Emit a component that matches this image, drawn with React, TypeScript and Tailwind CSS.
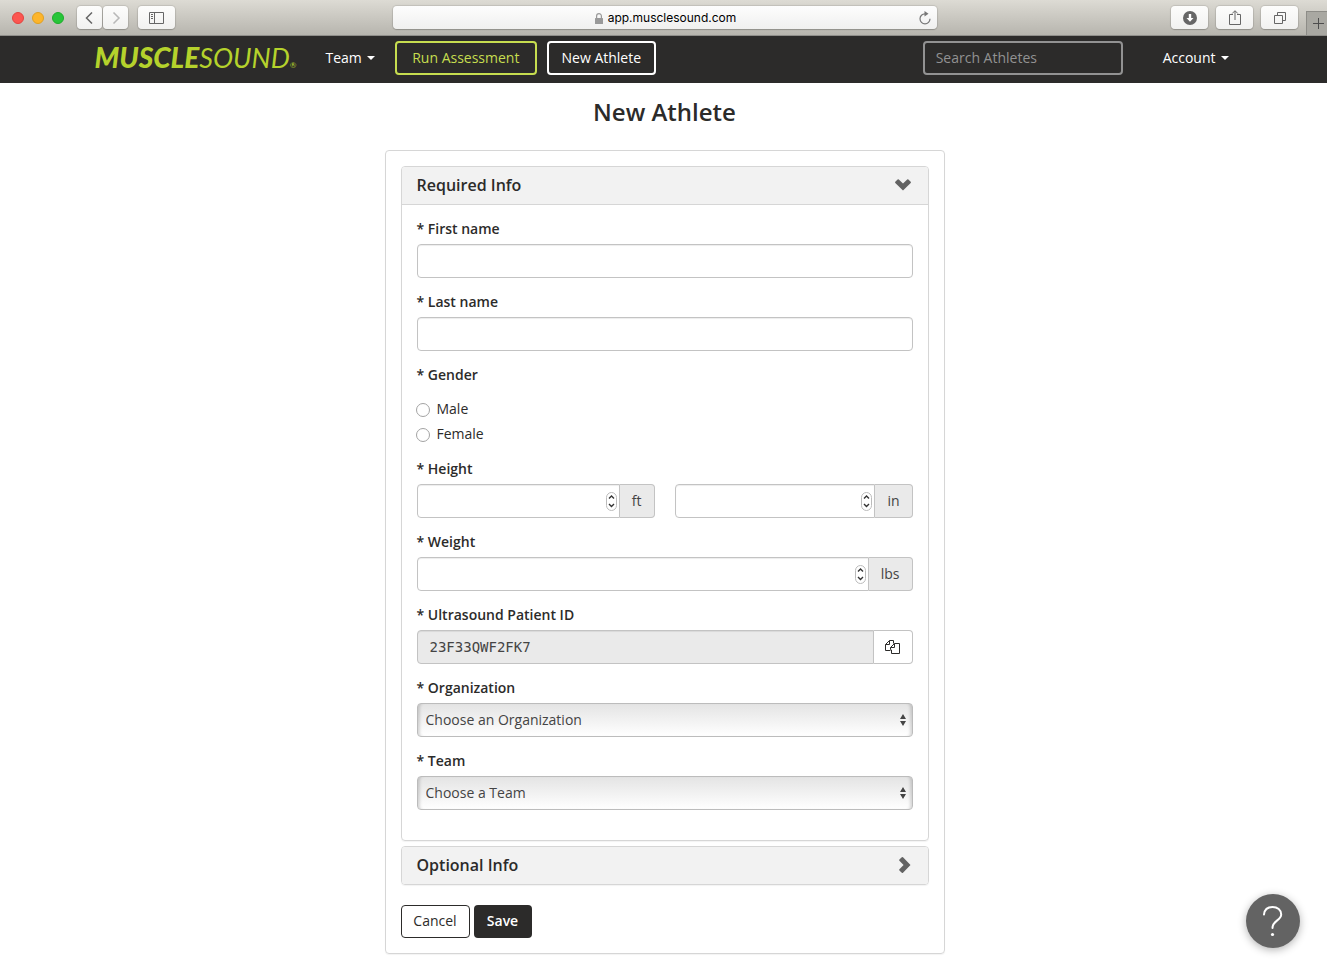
import { useState } from 'react'
import type { ReactNode } from 'react'

const fieldClasses =
  'h-[34px] min-w-0 flex-1 border border-[#c3c3c3] bg-white px-3 text-sm text-[#444] shadow-[inset_0_1px_1px_rgba(0,0,0,0.075)] outline-none'

const chromeButton =
  'flex h-[23px] items-center justify-center rounded bg-gradient-to-b from-[#fdfdfc] to-[#f1f1f0] text-[#666] shadow-[0_0_1px_1px_rgba(0,0,0,0.1),0_1px_1px_rgba(0,0,0,0.15)]'

export default function App() {
  return (
    <div className="min-h-screen bg-white font-['Open_Sans',sans-serif] text-sm text-[#2c2b2a]">
      <BrowserBar />
      <Navbar />
      <main className="pr-4 pl-[18px]">
        <h1 className="mt-[11px] text-center text-2xl leading-9 font-semibold">New Athlete</h1>
        <AthleteForm />
      </main>
      <button
        type="button"
        aria-label="Help"
        className="fixed right-[27px] bottom-[21px] flex size-[54px] items-center justify-center rounded-full bg-[#636363] shadow-[0_2px_8px_rgba(0,0,0,0.3)]"
      >
        <svg className="h-8 w-6" viewBox="0 0 24 32" fill="none" stroke="white" strokeWidth="2" strokeLinecap="round">
          <path d="M3 9.500C3.500 4.500 7 2 11.500 2c5 0 8.700 3 8.700 7.500C20.200 15.500 11.500 15.500 11.500 23" />
          <circle cx="11.500" cy="29.500" r="1.600" fill="white" stroke="none" />
        </svg>
      </button>
    </div>
  )
}

function BrowserBar() {
  return (
    <div className="flex h-9 items-center border-b border-[#8f8e8a] bg-gradient-to-b from-[#dddbd4] to-[#b7b5ae] pl-3">
      <div className="flex w-[381px] items-center">
        <div className="flex gap-2">
          <span className="size-3 rounded-full border border-[#e2443f] bg-[#fc5650]" />
          <span className="size-3 rounded-full border border-[#dfa023] bg-[#fdb52b]" />
          <span className="size-3 rounded-full border border-[#1dad2b] bg-[#27c539]" />
        </div>
        <div className="ml-[13px] flex gap-px">
          <button type="button" aria-label="Back" className={`${chromeButton} w-[25px]`}>
            <svg className="size-3" viewBox="0 0 12 12" fill="none" stroke="currentColor" strokeWidth="1.500">
              <path d="M8 0.500L2.500 6l5.500 5.500" />
            </svg>
          </button>
          <button type="button" aria-label="Forward" className={`${chromeButton} w-[25px]`}>
            <svg className="size-3" viewBox="0 0 12 12" fill="none" stroke="#b8b8b8" strokeWidth="1.500">
              <path d="M3.500 0.500L9 6l-5.500 5.500" />
            </svg>
          </button>
        </div>
        <button type="button" aria-label="Sidebar" className={`${chromeButton} ml-[10px] w-[37px]`}>
          <svg className="h-3 w-[15px]" viewBox="0 0 15 12" fill="none" stroke="currentColor">
            <path d="M0.500 0.500h14v11h-14zM5.500 0.500v11M2 2.500h2M2 4.500h2M2 6.500h2" />
          </svg>
        </button>
      </div>

      <div className="flex h-[23px] flex-1 items-center rounded bg-gradient-to-b from-[#fdfdfd] to-[#f0f0ef] pr-[5px] pl-5 text-black shadow-[0_0_1px_1px_rgba(0,0,0,0.1),0_1px_1px_rgba(0,0,0,0.15)]">
        <div className="flex flex-1 items-center justify-center gap-[5px] pt-px">
          <svg className="h-[11px] w-2" viewBox="0 0 8 11">
            <rect y="5" width="8" height="6" rx="0.500" fill="#999" />
            <path d="M1.600 5V3a2.400 2.400 0 0 1 4.800 0v2" fill="none" stroke="#999" strokeWidth="1.200" />
          </svg>
          <span className="font-[Inter,sans-serif] text-xs">app.musclesound.com</span>
        </div>
        <button type="button" aria-label="Reload">
          <svg className="size-[14px]" viewBox="0 0 14 14" fill="none" stroke="#777" strokeWidth="1.200">
            <path d="M7 2.800A5 5 0 1 0 12 7.800" />
            <path d="M6.500 0v5.600L10.500 2.800z" fill="#777" stroke="none" />
          </svg>
        </button>
      </div>

      <div className="flex w-[390px] items-center justify-end self-stretch">
        <div className="flex gap-2">
          <button type="button" aria-label="Downloads" className={`${chromeButton} w-[37px]`}>
            <svg className="size-[14px]" viewBox="0 0 14 14">
              <circle cx="7" cy="7" r="7" fill="#666" />
              <path d="M5.800 3h2.400v4h2.300L7 10.800 3.500 7h2.300z" fill="white" />
            </svg>
          </button>
          <button type="button" aria-label="Share" className={`${chromeButton} w-[37px]`}>
            <svg className="h-[15px] w-3" viewBox="0 0 12 15" fill="none" stroke="currentColor">
              <path d="M4 4.500H0.500v10h11v-10H8M6 10V1M3.200 3.500L6 0.700l2.800 2.800" />
            </svg>
          </button>
          <button type="button" aria-label="Show tabs" className={`${chromeButton} w-[37px]`}>
            <svg className="size-3" viewBox="0 0 12 12" fill="none" stroke="currentColor">
              <path d="M0.500 3.500h8v8h-8zM3.500 3.500v-3h8v8h-3" />
            </svg>
          </button>
        </div>
        <button
          type="button"
          aria-label="New tab"
          className="ml-2 flex h-6 w-[21px] items-center justify-end self-end border-t border-l border-[#8d8c87] bg-[#a9a8a2] pr-[3px]"
        >
          <svg className="size-[11px]" viewBox="0 0 11 11" stroke="#4d4d4d">
            <path d="M5.500 0v11M0 5.500h11" />
          </svg>
        </button>
      </div>
    </div>
  )
}

function Caret() {
  return (
    <svg className="h-1 w-2" viewBox="0 0 8 4" fill="currentColor">
      <path d="M0 0h8L4 4z" />
    </svg>
  )
}

function Navbar() {
  return (
    <nav className="bg-[#2c2b2a] text-white">
      <div className="mx-auto flex h-[47px] max-w-[1170px] items-center pr-5 pb-[3px] pl-4">
        <a
          href="#"
          className="flex w-[231px] items-baseline pt-[6px] font-[Lato,sans-serif] text-[27px] leading-8 text-[#b5d22c] italic"
        >
          <span className="text-[28px] font-black">MUSCLE</span>
          <span>SOUND</span>
          <span className="text-[8px]">®</span>
        </a>
        <button type="button" className="mr-5 flex items-center gap-[5px]">
          Team <Caret />
        </button>
        <button
          type="button"
          className="mr-[10px] h-[34px] w-[142px] rounded border-2 border-[#c6dd4f] pb-px text-[#c6dd4f]"
        >
          Run Assessment
        </button>
        <button type="button" className="h-[34px] w-[109px] rounded border-2 border-white pb-px">
          New Athlete
        </button>
        <input
          type="text"
          aria-label="Search Athletes"
          placeholder="Search Athletes"
          className="mr-10 ml-auto h-[34px] w-[200px] rounded border-2 border-[#929292] bg-transparent px-[11px] pb-[2px] outline-none placeholder:text-[#929292]"
        />
        <button type="button" className="flex items-center gap-[5px]">
          Account <Caret />
        </button>
      </div>
    </nav>
  )
}

function AthleteForm() {
  const [requiredOpen, setRequiredOpen] = useState(true)
  const [optionalOpen, setOptionalOpen] = useState(false)

  return (
    <form
      onSubmit={(e) => e.preventDefault()}
      className="mx-auto mt-5 mb-3 max-w-[560px] rounded border border-[#d6d6d6] p-[15px] shadow-[0_1px_1px_rgba(0,0,0,0.05)]"
    >
      <Panel title="Required Info" open={requiredOpen} onToggle={() => setRequiredOpen(!requiredOpen)}>
        <Field label="First name" id="first-name">
          <input id="first-name" type="text" className={`${fieldClasses} rounded`} />
        </Field>
        <Field label="Last name" id="last-name">
          <input id="last-name" type="text" className={`${fieldClasses} rounded`} />
        </Field>

        <fieldset className="pb-px">
          <legend className="leading-5 font-semibold">* Gender</legend>
          <div className="mt-[14px] flex flex-col gap-[5px]">
            <Radio label="Male" />
            <Radio label="Female" />
          </div>
        </fieldset>

        <div className="grid grid-cols-2 items-end gap-5">
          <Field label="Height" id="height-ft">
            <NumberInput id="height-ft" unit="ft" />
          </Field>
          <NumberInput id="height-in" unit="in" label="Height, inches" />
        </div>
        <Field label="Weight" id="weight">
          <NumberInput id="weight" unit="lbs" />
        </Field>

        <Field label="Ultrasound Patient ID" id="patient-id">
          <input
            id="patient-id"
            type="text"
            readOnly
            value="23F33QWF2FK7"
            className="h-[34px] min-w-0 flex-1 rounded-l border border-[#c3c3c3] bg-[#eaeaea] px-3 font-['DejaVu_Sans_Mono',monospace] text-sm text-[#444] shadow-[inset_0_1px_1px_rgba(0,0,0,0.075)] outline-none"
          />
          <button
            type="button"
            aria-label="Copy patient ID"
            className="flex w-[39px] items-center justify-center rounded-r border border-l-0 border-[#c3c3c3]"
          >
            <svg className="size-[15px]" viewBox="0 0 15 15" fill="none" stroke="currentColor">
              <path d="M5.500 10.500h-5v-6L4.500 0.500h4v3M4.500 0.500v4h-4" />
              <path d="M9.500 3.500h5v10h-8v-3.500l-1-0.500v-2zM9.500 3.500v4h-4" />
            </svg>
          </button>
        </Field>

        <Field label="Organization" id="organization">
          <SelectInput id="organization" placeholder="Choose an Organization" />
        </Field>
        <Field label="Team" id="team">
          <SelectInput id="team" placeholder="Choose a Team" />
        </Field>
      </Panel>

      <div className="mt-[5px]">
        <Panel title="Optional Info" open={optionalOpen} onToggle={() => setOptionalOpen(!optionalOpen)} />
      </div>

      <div className="mt-5 flex gap-1">
        <button type="button" className="h-[33px] w-[69px] rounded border border-[#2c2b2a] pb-px">
          Cancel
        </button>
        <button type="submit" className="h-[33px] w-[58px] rounded bg-[#2c2b2a] pb-px font-semibold text-white">
          Save
        </button>
      </div>
    </form>
  )
}

function Panel({
  title,
  open,
  onToggle,
  children,
}: {
  title: string
  open: boolean
  onToggle: () => void
  children?: ReactNode
}) {
  return (
    <section className="overflow-hidden rounded border border-[#d6d6d6] shadow-[0_1px_1px_rgba(0,0,0,0.05)]">
      <button
        type="button"
        aria-expanded={open}
        onClick={onToggle}
        className="flex h-[37px] w-full items-center justify-between bg-[#f2f2f2] pr-[17px] pb-px pl-[15px] text-base font-semibold"
      >
        {title}
        {/* Down when the panel is open, right when it is collapsed */}
        <svg className="size-4" viewBox="0 0 16 16" fill="#636363">
          {open ? (
            <path d="M0.300 4.800L2.600 2.400a1 1 0 0 1 1.200 0L8 6.600l4.200-4.200a1 1 0 0 1 1.200 0L15.700 4.800a1 1 0 0 1 0 1.200L8 13.500 0.300 6a1 1 0 0 1 0-1.200z" />
          ) : (
            <path d="M6.800 0.300L4.400 2.600a1 1 0 0 0 0 1.200L8.600 8l-4.200 4.200a1 1 0 0 0 0 1.200L6.800 15.700a1 1 0 0 0 1.200 0L15.500 8 8 0.300a1 1 0 0 0-1.200 0z" />
          )}
        </svg>
      </button>
      {open && children && (
        <div className="flex flex-col gap-[14px] border-t border-[#d6d6d6] px-[15px] pt-[14px] pb-[30px]">{children}</div>
      )}
    </section>
  )
}

function Field({ label, id, children }: { label: string; id: string; children: ReactNode }) {
  return (
    <div>
      <label htmlFor={id} className="mb-[5px] block leading-5 font-semibold">
        * {label}
      </label>
      <div className="flex">{children}</div>
    </div>
  )
}

function Radio({ label }: { label: string }) {
  return (
    <label className="-ml-px flex items-center gap-[7px] leading-5">
      <input
        type="radio"
        name="gender"
        className="mt-[2px] size-[14px] appearance-none rounded-full border border-[#a3a3a3] bg-white checked:border-4 checked:border-[#2c2b2a]"
      />
      {label}
    </label>
  )
}

function NumberInput({ id, unit, label }: { id: string; unit: string; label?: string }) {
  return (
    <div className="flex min-w-0 flex-1">
      <div className="relative flex min-w-0 flex-1">
        <input
          id={id}
          type="number"
          aria-label={label}
          className={`${fieldClasses} rounded-l [appearance:textfield] [&::-webkit-inner-spin-button]:appearance-none`}
        />
        <svg
          className="pointer-events-none absolute top-2 right-[3px] h-[19px] w-[11px]"
          viewBox="0 0 11 19"
          fill="none"
          stroke="#333"
          strokeWidth="1.400"
        >
          <rect x="0.500" y="0.500" width="10" height="18" rx="5" stroke="#bbb" strokeWidth="1" />
          <path d="M3 6.500l2.500-2.500L8 6.500M3 12l2.500 2.500L8 12" />
        </svg>
      </div>
      <span className="flex items-center rounded-r border border-l-0 border-[#c3c3c3] bg-[#eaeaea] px-3 text-[#444]">
        {unit}
      </span>
    </div>
  )
}

function SelectInput({ id, placeholder }: { id: string; placeholder: string }) {
  return (
    <div className="relative flex flex-1">
      <select
        id={id}
        className="h-[34px] flex-1 appearance-none rounded border border-[#bcbcbc] bg-gradient-to-b from-[#e4e4e4] to-white px-2 text-[#444] shadow-[inset_4px_0_3px_-2px_rgba(0,0,0,0.15),inset_-4px_0_3px_-2px_rgba(0,0,0,0.15)] outline-none"
      >
        <option>{placeholder}</option>
      </select>
      <svg
        className="pointer-events-none absolute top-[11px] right-[7px] h-3 w-[6px]"
        viewBox="0 0 6 12"
        fill="#444"
      >
        <path d="M0 5h6L3 0zM0 7h6L3 12z" />
      </svg>
    </div>
  )
}
